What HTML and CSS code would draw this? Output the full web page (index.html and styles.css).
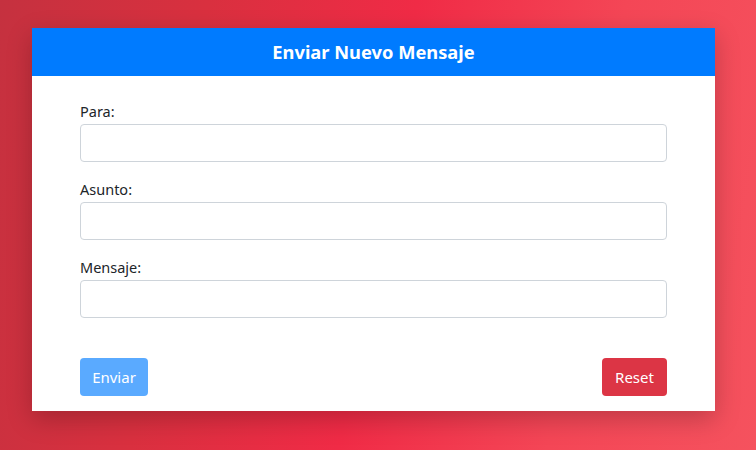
FILE: index.html
```html
<!DOCTYPE html>
<html lang="es">
<head>
<meta charset="utf-8">
<title>Enviar Nuevo Mensaje</title>
<link rel="stylesheet" href="styles.css">
</head>
<body>
<div class="page">
  <div class="card">
    <div class="card-header">Enviar Nuevo Mensaje</div>
    <form class="card-body">
      <div class="group">
        <label class="label" for="para">Para:</label>
        <input class="input" id="para" type="text">
      </div>
      <div class="group">
        <label class="label" for="asunto">Asunto:</label>
        <input class="input" id="asunto" type="text">
      </div>
      <div class="group">
        <label class="label" for="mensaje">Mensaje:</label>
        <input class="input" id="mensaje" type="text">
      </div>
      <div class="actions">
        <button type="button" class="btn btn-primary" disabled>Enviar</button>
        <button type="reset" class="btn btn-danger">Reset</button>
      </div>
    </form>
  </div>
</div>
</body>
</html>
```
FILE: styles.css
```css
html, body {
  margin: 0;
  height: 100%;
}
body {
  font-family: "Noto Sans", "Open Sans", sans-serif;
  background: linear-gradient(100deg, #c5313f 0%, #d9303f 25%, #f02b46 50%, #f44656 75%, #f5525e 100%);
  overflow: hidden;
}
.page {
  padding: 28px 41px 0 32px;
}
.card {
  background: #fff;
  box-shadow: 0 8px 24px rgba(0, 0, 0, 0.22);
}
.card-header {
  background: #007bff;
  color: #fff;
  height: 48px;
  display: flex;
  align-items: center;
  justify-content: center;
  font-weight: 700;
  font-size: 18.3px;
  padding-bottom: 2px;
  box-sizing: border-box;
}
.card-body {
  padding: 24px 48px 15px;
  display: flex;
  flex-direction: column;
}
.group {
  display: flex;
  flex-direction: column;
  margin-bottom: 16px;
}
.label {
  font-size: 14.5px;
  line-height: 22px;
  color: #212529;
  margin-bottom: 2px;
}
.input {
  height: 38px;
  box-sizing: border-box;
  border: 1px solid #ced4da;
  border-radius: 4px;
  padding: 6px 12px;
  font: inherit;
  margin: 0;
}
.actions {
  display: flex;
  justify-content: space-between;
  margin-top: 24px;
}
.btn {
  height: 38px;
  box-sizing: border-box;
  border: 0;
  border-radius: 4px;
  color: #fff;
  font-family: inherit;
  font-size: 15px;
  padding: 0 12px;
}
.btn-primary {
  background: #5aaaff;
  width: 68px;
}
.btn-danger {
  background: #dc3545;
  width: 65px;
}
```
